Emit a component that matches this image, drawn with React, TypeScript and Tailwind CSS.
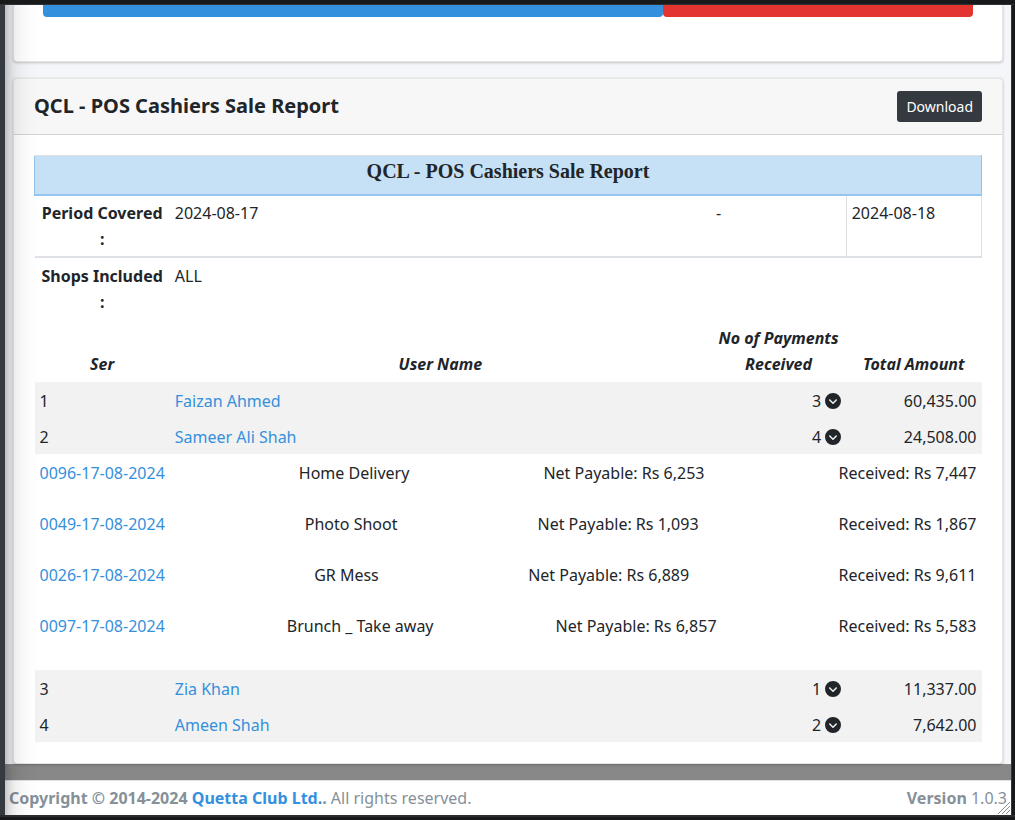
import React from "react";
import { FaCircleChevronDown } from "react-icons/fa6";

type Payment = { receipt: string; shop: string; payable: string; received: string };
type Cashier = { ser: number; name: string; count: number; total: string; payments?: Payment[] };

const cashiers: Cashier[] = [
  { ser: 1, name: "Faizan Ahmed", count: 3, total: "60,435.00" },
  {
    ser: 2,
    name: "Sameer Ali Shah",
    count: 4,
    total: "24,508.00",
    payments: [
      { receipt: "0096-17-08-2024", shop: "Home Delivery", payable: "6,253", received: "7,447" },
      { receipt: "0049-17-08-2024", shop: "Photo Shoot", payable: "1,093", received: "1,867" },
      { receipt: "0026-17-08-2024", shop: "GR Mess", payable: "6,889", received: "9,611" },
      { receipt: "0097-17-08-2024", shop: "Brunch _ Take away", payable: "6,857", received: "5,583" },
    ],
  },
  { ser: 3, name: "Zia Khan", count: 1, total: "11,337.00" },
  { ser: 4, name: "Ameen Shah", count: 2, total: "7,642.00" },
];

function Card({ className = "", children }: { className?: string; children: React.ReactNode }) {
  return (
    <section
      className={`border border-black/10 bg-white shadow-[0_0_1px_rgba(0,0,0,0.125),0_1px_3px_rgba(0,0,0,0.2)] ${className}`}
    >
      {children}
    </section>
  );
}

function CashierRows({ cashier }: { cashier: Cashier }) {
  return (
    <>
      <tr className="bg-[#f2f2f2]">
        <td className="px-[5px] pt-1.5 pb-1">{cashier.ser}</td>
        <td className="px-[5px] pt-1.5 pb-1">
          <a href="#" className="text-[#3490dc]">{cashier.name}</a>
        </td>
        <td className="px-[5px] pt-1.5 pb-1">
          <div className="flex items-center justify-end gap-1">
            {cashier.count}
            <button type="button" aria-label={`Toggle payments of ${cashier.name}`}>
              <FaCircleChevronDown className="size-4" />
            </button>
          </div>
        </td>
        <td className="px-[5px] pt-1.5 pb-1 text-right">{cashier.total}</td>
      </tr>
      {cashier.payments && (
        <tr>
          <td colSpan={4} className="px-[5px] pt-1.5 pb-1">
            {cashier.payments.map((p) => (
              <div key={p.receipt} className="flex justify-between pb-[25px] last:pb-[27px]">
                <a href="#" className="text-[#3490dc]">{p.receipt}</a>
                <span>{p.shop}</span>
                <span>Net Payable: Rs {p.payable}</span>
                <span>Received: Rs {p.received}</span>
              </div>
            ))}
          </td>
        </tr>
      )}
    </>
  );
}

export default function App() {
  return (
    <div className="flex min-h-screen flex-col bg-[#18191b] font-['Noto_Sans',sans-serif] text-base leading-[26px] text-[#212529]">
      <div className="h-[5px] border-b border-[#2f3133]" />
      <div className="flex flex-1 overflow-hidden">
        <aside className="relative z-10 -mt-12 -ml-[245px] w-[250px] shrink-0 bg-[#343a40] shadow-[0_14px_28px_rgba(0,0,0,0.25),0_10px_10px_rgba(0,0,0,0.22)]" />
        <div className="flex min-w-0 flex-1 flex-col bg-[#888888]">
          <main className="bg-[#f4f6f9] pr-2 pl-2">
            <Card className="rounded-b border-t-0 px-[29px] pb-11">
              <div className="flex h-3">
                <button type="button" aria-label="Search" className="flex-[2] rounded-b bg-[#3490dc]" />
                <button type="button" aria-label="Reset" className="flex-1 rounded-b bg-[#e3342f]" />
              </div>
            </Card>
            <Card className="mt-4 rounded">
              <header className="flex items-start justify-between rounded-t border-b border-black/15 bg-[#f7f7f7] px-5 py-3">
                <h1 className="text-xl leading-[29px] font-bold">QCL - POS Cashiers Sale Report</h1>
                <button type="button" className="rounded-[3px] bg-[#343a40] px-[9px] py-1 text-sm leading-[23px] text-white">
                  Download
                </button>
              </header>
              <div className="px-5 pt-5 pb-[21px]">
                <table className="w-full table-fixed border-collapse">
                  <colgroup>
                    <col className="w-1/7" />
                    <col className="w-4/7" />
                    <col className="w-1/7" />
                    <col className="w-1/7" />
                  </colgroup>
                  <thead>
                    <tr>
                      <th
                        colSpan={4}
                        className="border border-b-2 border-[#95c5ed] border-t-[#dee2e6] bg-[#c6e0f5] pt-0.5 pb-2.5 align-top font-['Liberation_Serif',serif] text-xl leading-[26px] font-bold"
                      >
                        QCL - POS Cashiers Sale Report
                      </th>
                    </tr>
                    <tr className="border-b-2 border-[#dee2e6] align-top">
                      <th className="px-[5px] py-1">Period Covered :</th>
                      <td className="px-[5px] py-1">2024-08-17</td>
                      <td className="px-[5px] py-1">-</td>
                      <td className="border-x border-[#dee2e6] px-[5px] py-1">2024-08-18</td>
                    </tr>
                    <tr className="align-top">
                      <th className="px-[5px] py-[5px]">Shops Included :</th>
                      <td colSpan={3} className="px-[5px] py-[5px]">ALL</td>
                    </tr>
                    <tr className="align-bottom italic">
                      <th className="px-[5px] py-[5px]">Ser</th>
                      <th className="px-[5px] py-[5px]">User Name</th>
                      <th className="px-[5px] py-[5px]">No of Payments Received</th>
                      <th className="px-[5px] py-[5px]">Total Amount</th>
                    </tr>
                  </thead>
                  <tbody>
                    {cashiers.map((c) => (
                      <CashierRows key={c.ser} cashier={c} />
                    ))}
                  </tbody>
                </table>
              </div>
            </Card>
          </main>
          <footer className="relative mt-4 flex flex-1 items-center justify-between border-t border-[#dee2e6] bg-white px-1 text-[#869099]">
            <p>
              <strong className="font-bold">
                Copyright © 2014-2024 <a href="#" className="text-[#3490dc]">Quetta Club Ltd.</a>.
              </strong>{" "}
              All rights reserved.
            </p>
            <p>
              <b className="font-bold">Version</b> 1.0.3
            </p>
            <svg className="absolute right-0 bottom-0 size-3.5" viewBox="0 0 14 14" fill="none" stroke="#8c8c8c" aria-hidden="true">
              <path d="M1 13 13 1M5 13l8-8M9 13l4-4" />
            </svg>
          </footer>
        </div>
        <div className="w-1 shrink-0 border-l border-[#343638]" />
      </div>
      <div className="h-[5px] border-t-2 border-[#2c2d30]" />
    </div>
  );
}
